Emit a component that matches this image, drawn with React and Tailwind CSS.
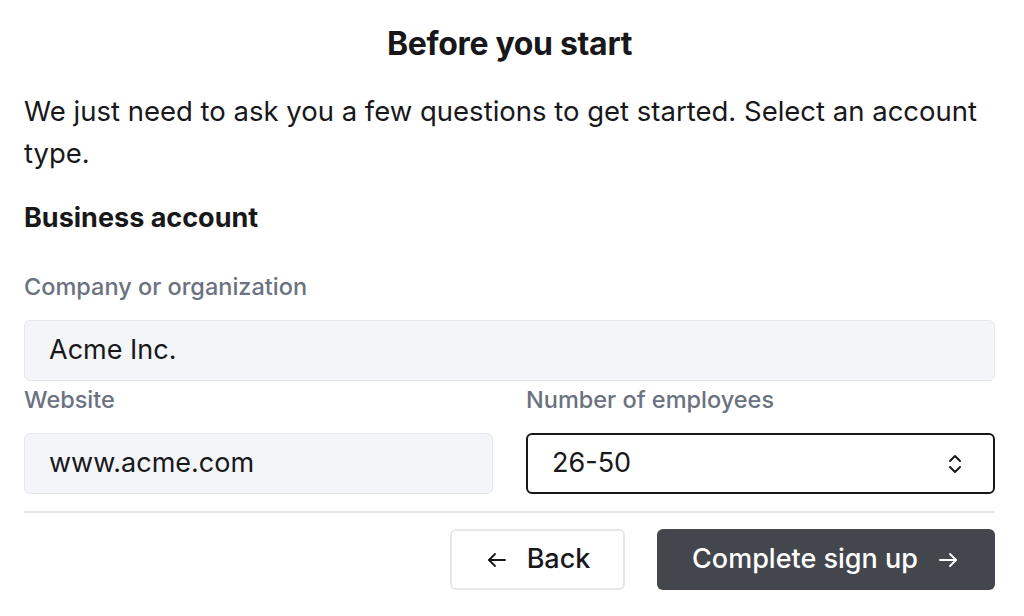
export default function App() {
  return (
    <div className="w-[1024px] h-[616px] bg-white overflow-hidden text-[#18181b]" style={{ fontFamily: 'Inter, "Noto Sans", sans-serif' }}>
      <div className="pl-6 pr-[29px] pt-[24px]">
        <h1 className="text-center text-[32px] font-bold leading-[40px] tracking-[-0.01em]">Before you start</h1>
        <p className="mt-[26px] text-[27.5px] leading-[42px]">
          We just need to ask you a few questions to get started. Select an account type.
        </p>
        <h2 className="mt-[26px] text-[27px] font-bold leading-[36px]">Business account</h2>

        <label className="block mt-[35px] text-[23.5px] font-medium text-[#6b7280] leading-[32px]">Company or organization</label>
        <div className="mt-[17px] h-[61px] rounded-[6px] border border-[#e5e7eb] bg-[#f4f5f8] flex items-center px-6 text-[27px]">
          Acme Inc.
        </div>

        <div className="grid grid-cols-2 gap-[33px]">
          <div>
            <label className="block mt-[3px] text-[23.5px] font-medium text-[#6b7280] leading-[32px]">Website</label>
            <div className="mt-[17px] h-[61px] rounded-[6px] border border-[#e5e7eb] bg-[#f4f5f8] flex items-center px-6 text-[27px]">
              www.acme.com
            </div>
          </div>
          <div>
            <label className="block mt-[3px] text-[23.5px] font-medium text-[#6b7280] leading-[32px]">Number of employees</label>
            <div className="mt-[17px] h-[61px] rounded-[6px] border-2 border-[#18181b] bg-white flex items-center justify-between pl-6 pr-[30px] text-[27px]">
              <span>26-50</span>
              <svg width="16" height="22" viewBox="0 0 16 22" fill="none" stroke="#18181b" strokeWidth="2" strokeLinecap="round" strokeLinejoin="round">
                <path d="M3 8l5-5 5 5" />
                <path d="M3 14l5 5 5-5" />
              </svg>
            </div>
          </div>
        </div>

        <div className="mt-[17px] border-t-2 border-[#e5e7eb]" />

        <div className="mt-[16px] flex justify-end gap-[32px]">
          <button className="h-[61px] w-[175px] rounded-[6px] border-2 border-[#e5e7eb] bg-white flex items-center justify-center gap-[18px] text-[27px] font-medium">
            <svg width="24" height="24" viewBox="0 0 24 24" fill="none" stroke="#18181b" strokeWidth="1.8" strokeLinecap="round" strokeLinejoin="round">
              <path d="M20 12H4" />
              <path d="M10 6l-6 6 6 6" />
            </svg>
            Back
          </button>
          <button className="h-[61px] w-[338px] rounded-[6px] bg-[#43464d] text-white flex items-center justify-center gap-[18px] text-[27px] font-medium">
            Complete sign up
            <svg width="24" height="24" viewBox="0 0 24 24" fill="none" stroke="white" strokeWidth="1.8" strokeLinecap="round" strokeLinejoin="round">
              <path d="M4 12h16" />
              <path d="M14 6l6 6-6 6" />
            </svg>
          </button>
        </div>
      </div>
    </div>
  );
}
